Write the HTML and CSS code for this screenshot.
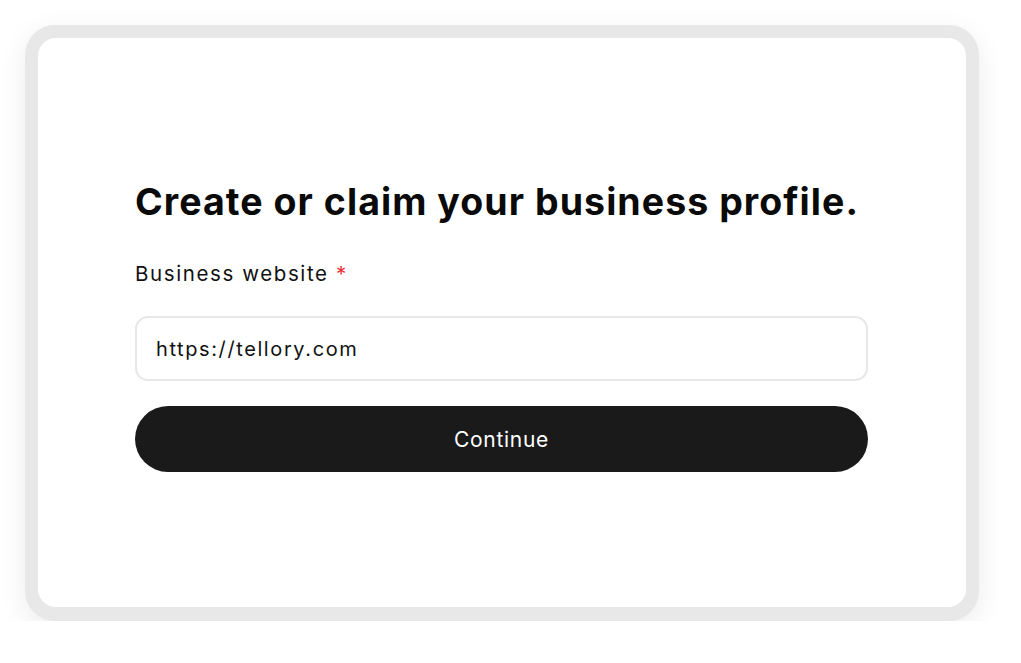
FILE: index.html
```html
<!DOCTYPE html>
<html lang="en">
<head>
<meta charset="utf-8">
<title>Create or claim your business profile</title>
<link rel="stylesheet" href="styles.css">
</head>
<body>
<div class="stage">
  <div class="frame">
    <div class="card">
      <form class="form">
        <h1 class="title">Create or claim your business profile.</h1>
        <label class="label" for="site">Business website <span class="req">*</span></label>
        <input class="input" id="site" type="text" value="https://tellory.com">
        <button class="button" type="button">Continue</button>
      </form>
    </div>
  </div>
</div>
</body>
</html>
```
FILE: styles.css
```css
* { box-sizing: border-box; }
html, body { margin: 0; padding: 0; background: #ffffff; }
body {
  font-family: Inter, "Noto Sans", sans-serif;
  color: #0b0b0b;
}
.stage { padding: 25px 0 0 25px; }
.frame {
  width: 954px;
  height: 596px;
  background: #e8e8e8;
  border-radius: 30px;
  padding: 13px 13px 14px 13px;
  box-shadow: 0 8px 28px rgba(0, 0, 0, 0.08);
}
.card {
  height: 100%;
  background: #ffffff;
  border-radius: 18px;
  padding: 142px 98px 0 97px;
}
.form { display: flex; flex-direction: column; }
.title {
  margin: 0 0 38px 0;
  font-size: 37.5px;
  font-weight: 700;
  line-height: 44px;
  letter-spacing: 1.05px;
  color: #0a0a0a;
}
.label {
  font-size: 20.5px;
  font-weight: 400;
  line-height: 24px;
  letter-spacing: 1.6px;
  color: #111;
  margin-bottom: 30px;
}
.req { color: #f0313c; }
.input {
  height: 65px;
  border: 2px solid #e7e7e7;
  border-radius: 13px;
  padding: 0 19px;
  font-family: inherit;
  font-size: 20px;
  letter-spacing: 1.6px;
  color: #111;
  outline: none;
  margin-bottom: 25px;
}
.button {
  height: 66px;
  border: none;
  border-radius: 33px;
  background: #1a1a1a;
  color: #ffffff;
  font-family: inherit;
  font-size: 21px;
  font-weight: 400;
  letter-spacing: 0.7px;
}
```
